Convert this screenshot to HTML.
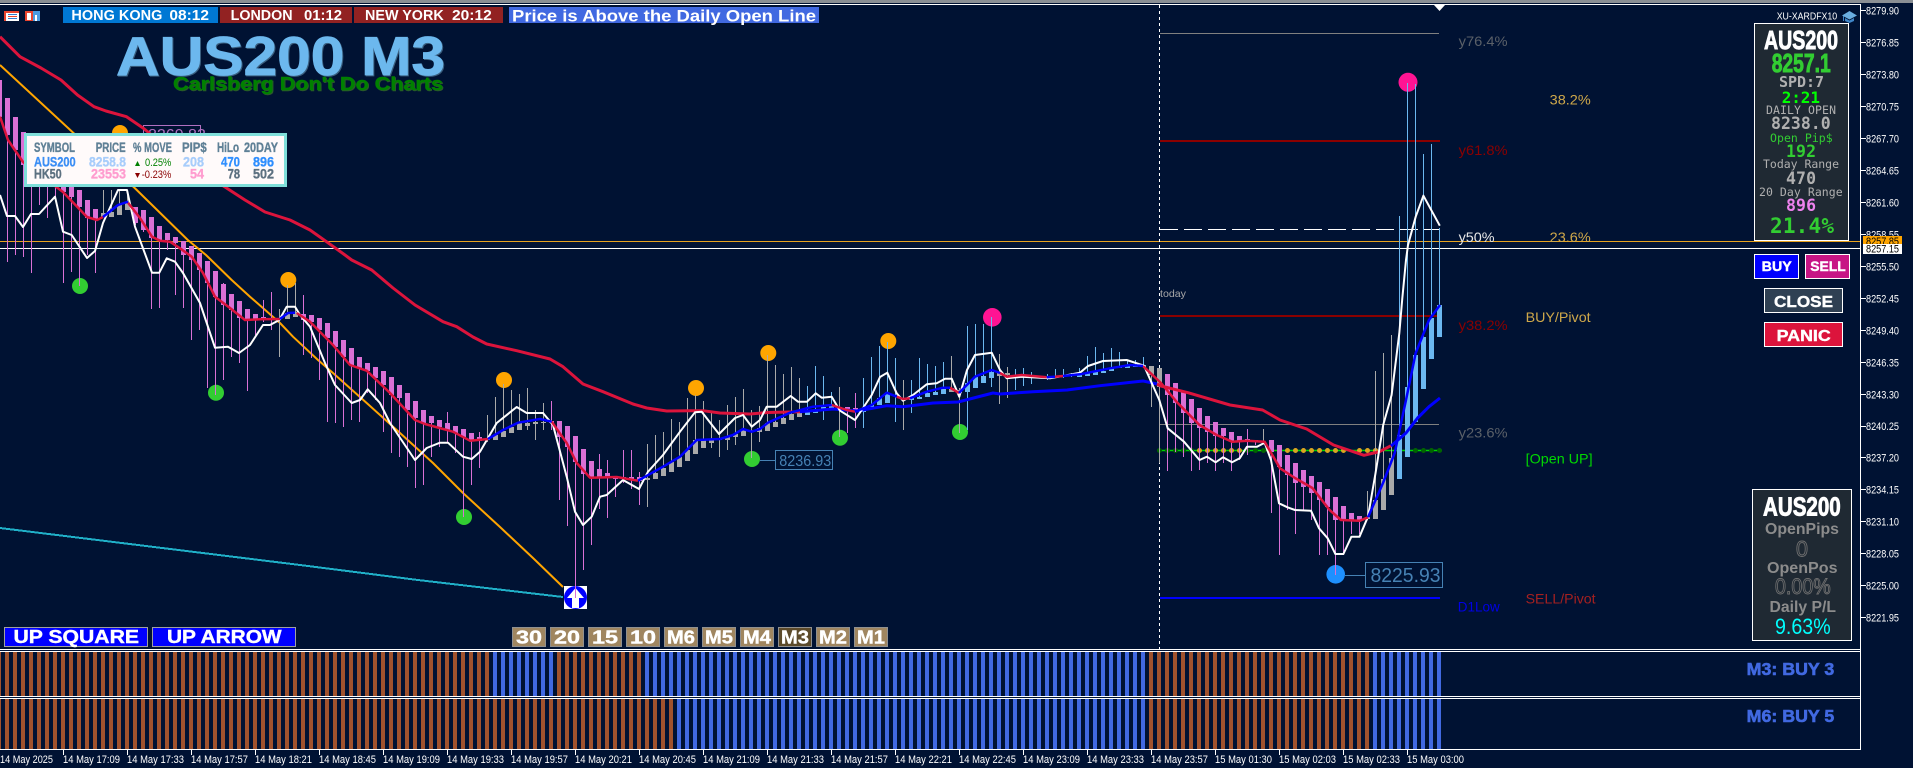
<!DOCTYPE html>
<html><head><meta charset="utf-8"><title>AUS200 M3</title>
<style>
html,body{margin:0;padding:0;background:#001233;width:1913px;height:768px;overflow:hidden}
svg{display:block}
text{font-family:"Liberation Sans",Arial,sans-serif}
.m{font-family:"DejaVu Sans Mono","Liberation Mono",monospace}
.b{font-weight:bold}
.ax{font-size:11px;fill:#fff}
.tm{font-size:11px;fill:#fff}
.l{fill:none;stroke-linejoin:round}
</style></head><body>
<svg width="1913" height="768" viewBox="0 0 1913 768" xmlns="http://www.w3.org/2000/svg">
<defs>
<pattern id="br" x="5" y="0" width="8" height="10" patternUnits="userSpaceOnUse"><rect width="4" height="10" fill="#a0522d"/></pattern>
<pattern id="bl" x="5" y="0" width="8" height="10" patternUnits="userSpaceOnUse"><rect width="4" height="10" fill="#4169e1"/></pattern>
</defs>
<rect width="1913" height="768" fill="#001233"/>
<rect width="1913" height="3" fill="#8a8f94"/>
<g shape-rendering="crispEdges">
<rect x="0" y="4" width="1861" height="1" fill="#fff"/>
<rect x="1860" y="4" width="1" height="746" fill="#fff"/>
<rect x="0" y="649" width="1861" height="1" fill="#fff"/>
<rect x="0" y="651" width="1861" height="1" fill="#fff"/>
<rect x="0" y="696" width="1861" height="1" fill="#fff"/>
<rect x="0" y="698" width="1861" height="1" fill="#fff"/>
<rect x="0" y="749" width="1861" height="1" fill="#fff"/>
<!-- subwindow stripes -->
<rect x="0" y="652" width="493" height="44" fill="url(#br)"/>
<rect x="493" y="652" width="64" height="44" fill="url(#bl)"/>
<rect x="557" y="652" width="88" height="44" fill="url(#br)"/>
<rect x="645" y="652" width="504" height="44" fill="url(#bl)"/>
<rect x="1149" y="652" width="224" height="44" fill="url(#br)"/>
<rect x="1373" y="652" width="68" height="44" fill="url(#bl)"/>
<rect x="0" y="699" width="677" height="50" fill="url(#br)"/>
<rect x="677" y="699" width="472" height="50" fill="url(#bl)"/>
<rect x="1149" y="699" width="224" height="50" fill="url(#br)"/>
<rect x="1373" y="699" width="68" height="50" fill="url(#bl)"/>
<!-- levels -->
<line x1="0" x2="1860" y1="241.5" y2="241.5" stroke="#e6a21e"/>
<line x1="0" x2="1860" y1="248.5" y2="248.5" stroke="#fff"/>
<line x1="1159.5" x2="1159.5" y1="5" y2="649" stroke="#fff" stroke-dasharray="3 3"/>
<line x1="1160" x2="1439" y1="33.5" y2="33.5" stroke="#808080"/>
<rect x="1160" y="140" width="280" height="2" fill="#8b0000"/>
<line x1="1160" x2="1440" y1="229.5" y2="229.5" stroke="#fff" stroke-dasharray="18 6"/>
<rect x="1160" y="315" width="280" height="2" fill="#8b0000"/>
<line x1="1160" x2="1439" y1="424.5" y2="424.5" stroke="#808080"/>
<rect x="1160" y="597" width="280" height="2" fill="#0000ff"/>
</g>
<polygon points="1434,5 1445,5 1439.5,11" fill="#fff"/>
<line x1="1157" x2="1442" y1="450.5" y2="450.5" stroke="#00d000" stroke-width="1.5"/>
<g stroke-width="5" stroke-linecap="round" stroke-dasharray="0 8" fill="none">
<line x1="1159.5" x2="1192" y1="450.5" y2="450.5" stroke="#006400"/>
<line x1="1199.5" x2="1240" y1="450.5" y2="450.5" stroke="#daa520"/>
<line x1="1247.5" x2="1272" y1="450.5" y2="450.5" stroke="#006400"/>
<line x1="1279.5" x2="1344" y1="450.5" y2="450.5" stroke="#daa520"/>
<line x1="1359.5" x2="1376" y1="450.5" y2="450.5" stroke="#daa520"/>
<line x1="1407.5" x2="1440" y1="450.5" y2="450.5" stroke="#006400"/>
</g>
<!-- trendlines -->
<polyline class="l" stroke="#20b0c8" stroke-width="2" points="0,528 300,565 418,580 563,597" shape-rendering="crispEdges"/>
<polyline class="l" stroke="#ffa500" stroke-width="2" points="0,65 73.5,133 134.7,188 187.8,240 206,255 231.7,280 250,296.7 280,323 293,336.7 318,360 333,373 366.7,403 400,433 433,463 463,493 500,527 533,558 563,587"/>
<!-- hidden label behind table -->
<rect x="143.5" y="125.5" width="57" height="20" fill="none" stroke="#b070c0"/>
<text x="148" y="140" font-size="16" fill="#b070c0">8269.83</text>
<!-- dots -->
<g fill="#ffa500"><circle cx="120" cy="133" r="8"/><circle cx="288.3" cy="280" r="8"/><circle cx="504" cy="380" r="8"/><circle cx="696" cy="388" r="8"/><circle cx="768.3" cy="353" r="8"/><circle cx="888.3" cy="341" r="8"/></g>
<g fill="#32cd32"><circle cx="80" cy="286" r="8"/><circle cx="216" cy="392.7" r="8"/><circle cx="464" cy="517" r="8"/><circle cx="752" cy="459" r="8"/><circle cx="840" cy="437.7" r="8"/><circle cx="960" cy="432" r="8"/></g>
<g fill="#ff1493"><circle cx="992.3" cy="317.3" r="9.3"/><ellipse cx="1408" cy="82.3" rx="9.5" ry="9.5"/></g>
<circle cx="1335.7" cy="574.3" r="9.3" fill="#1e90ff"/>
<line x1="1345" x2="1366" y1="575.5" y2="575.5" stroke="#4682b4"/>
<rect x="1365.5" y="562.5" width="77" height="25" fill="none" stroke="#4682b4"/>
<text x="1370.5" y="582" font-size="20" fill="#4682b4" textLength="70" lengthAdjust="spacingAndGlyphs">8225.93</text>
<line x1="760" x2="776" y1="460.5" y2="460.5" stroke="#4682b4"/>
<rect x="775.5" y="450.5" width="57" height="19" fill="none" stroke="#4682b4"/>
<text x="779.3" y="466" font-size="15.5" fill="#4682b4" textLength="52" lengthAdjust="spacingAndGlyphs">8236.93</text>
<!-- arrow -->
<rect x="564" y="586" width="23" height="23" fill="#fff"/>
<ellipse cx="575.5" cy="597.5" rx="11.5" ry="11.5" fill="#0000ff"/>
<polygon points="575.5,588 584,598 579,598 579,608 572,608 572,598 567,598" fill="#fff"/>
<!-- candles -->
<g shape-rendering="crispEdges" fill="none">
<path stroke="#da70d6" d="M7.5 98V262M15.5 117V255M23.5 132V257M31.5 140V273M39.5 150V205M47.5 160V218M55.5 170V197M63.5 175V283M71.5 187V272M79.5 190V286M87.5 200V255M95.5 209V273M135.5 207V225M143.5 210V232M151.5 217V309M159.5 226V308M167.5 233V250M175.5 237V295M183.5 241V308M191.5 246V340M199.5 253V330M207.5 261V388M215.5 271V395M223.5 283V380M231.5 294V357M239.5 301V363M247.5 309V391M255.5 314V335M263.5 300V322M271.5 292V330M303.5 295V355M311.5 315V358M319.5 318V380M327.5 323V422M335.5 331V423M343.5 340V427M351.5 348V420M359.5 357V422M367.5 363V393M375.5 367V400M383.5 371V432M391.5 377V453M399.5 385V457M407.5 393V467M415.5 401V488M423.5 410V485M431.5 416V457M439.5 420V447M447.5 412V443M455.5 426V453M463.5 429V517M471.5 433V485M479.5 432V468M551.5 401V430M559.5 421V500M567.5 426V526M575.5 436V598M583.5 449V570M591.5 461V545M599.5 454V509M607.5 460V518M615.5 477V497M623.5 450V483M631.5 450V489M639.5 472V505M847.5 407V433M855.5 393V428M1167.5 374V471M1175.5 383V452M1183.5 392V457M1191.5 399V471M1199.5 408V470M1207.5 416V463M1215.5 422V471M1223.5 428V463M1231.5 432V471M1239.5 436V460M1247.5 429V455M1255.5 440V445M1271.5 440V513M1279.5 445V555M1287.5 455V510M1295.5 463V534M1303.5 470V510M1311.5 476V520M1319.5 482V555M1327.5 489V555M1335.5 497V575M1343.5 506V555M1351.5 513V534M1359.5 516V534"/>
<path stroke="#a9a9a9" d="M103.5 190V217M111.5 190V217M119.5 190V215M127.5 190V210M279.5 309V357M287.5 285V319M295.5 283V317M487.5 415V442M495.5 397V440M503.5 384V437M511.5 390V433M519.5 394V430M527.5 388V430M535.5 410V440M543.5 403V430M647.5 444V507M655.5 435V479M663.5 432V476M671.5 419V472M679.5 422V467M687.5 398V461M695.5 395V454M703.5 401V448M711.5 413V448M719.5 420V457M727.5 405V450M735.5 397V445M743.5 389V436M751.5 410V458M759.5 406V442M767.5 355V431M775.5 365V427M783.5 374V424M791.5 367V420M799.5 378V417M839.5 387V437M903.5 380V430M951.5 356V392M959.5 388V433M999.5 354V404M1007.5 367V398M1151.5 366V407M1159.5 368V463M1263.5 429V442M1367.5 491V520M1375.5 371V519M1383.5 353V510M1391.5 335V495"/>
<path stroke="#6cb8f0" d="M807.5 386V415M815.5 366V413M823.5 376V420M831.5 392V408M863.5 378V428M871.5 357V407M879.5 346V405M887.5 342V403M895.5 358V422M911.5 380V413M919.5 358V399M927.5 364V397M935.5 366V395M943.5 362V394M967.5 326V430M975.5 324V388M983.5 324V383M991.5 317V387M1015.5 369V390M1023.5 368V386M1031.5 372V384M1047.5 374V380M1055.5 369V378M1063.5 369V378M1071.5 373V377M1079.5 368V377M1087.5 356V376M1095.5 347V375M1103.5 353V373M1111.5 348V371M1119.5 352V368M1127.5 360V368M1135.5 360V367M1143.5 357V367M1399.5 216V479M1407.5 83V457M1415.5 84V422M1423.5 154V389M1431.5 144V359M1439.5 228V337"/>
<path stroke="none" fill="#da70d6" d="M-3 80h5V117h-5zM5 98h5V135h-5zM13 117h5V150h-5zM21 132h5V165h-5zM61 185h5V192h-5zM69 187h5V197h-5zM77 190h5V207h-5zM85 200h5V218h-5zM93 209h5V220h-5zM133 207h5V223h-5zM141 210h5V230h-5zM149 217h5V238h-5zM157 226h5V240h-5zM165 233h5V240h-5zM173 237h5V243h-5zM181 241h5V255h-5zM189 246h5V260h-5zM197 253h5V270h-5zM205 261h5V283h-5zM213 271h5V297h-5zM221 284h5V305h-5zM229 294h5V310h-5zM237 301h5V318h-5zM245 309h5V319h-5zM253 314h5V320h-5zM261 317h5V320h-5zM269 318h5V320h-5zM301 314h5V320h-5zM309 315h5V322h-5zM317 318h5V330h-5zM325 323h5V338h-5zM333 331h5V347h-5zM341 340h5V357h-5zM349 348h5V365h-5zM357 357h5V368h-5zM365 363h5V371h-5zM373 367h5V378h-5zM381 371h5V385h-5zM389 377h5V395h-5zM397 385h5V398h-5zM405 393h5V410h-5zM413 401h5V418h-5zM421 410h5V423h-5zM429 416h5V423h-5zM437 420h5V427h-5zM445 423h5V430h-5zM453 426h5V433h-5zM461 429h5V437h-5zM469 433h5V440h-5zM477 437h5V441h-5zM549 421h5V423h-5zM557 421h5V437h-5zM565 426h5V447h-5zM573 436h5V462h-5zM581 449h5V474h-5zM589 461h5V478h-5zM597 469h5V478h-5zM605 473h5V478h-5zM613 477h5V479h-5zM621 477h5V479h-5zM629 477h5V479h-5zM637 477h5V481h-5zM845 407h5V410h-5zM853 408h5V410h-5zM1165 374h5V395h-5zM1173 383h5V403h-5zM1181 392h5V413h-5zM1189 399h5V423h-5zM1197 408h5V428h-5zM1205 416h5V432h-5zM1213 422h5V436h-5zM1221 428h5V436h-5zM1229 432h5V441h-5zM1237 436h5V442h-5zM1245 439h5V442h-5zM1253 440h5V442h-5zM1269 440h5V452h-5zM1277 445h5V467h-5zM1285 455h5V475h-5zM1293 463h5V483h-5zM1301 470h5V487h-5zM1309 476h5V493h-5zM1317 482h5V500h-5zM1325 489h5V507h-5zM1333 497h5V520h-5zM1341 506h5V520h-5zM1349 513h5V520h-5zM1357 516h5V520h-5z"/>
<path stroke="none" fill="#a9a9a9" d="M101 213h5V217h-5zM109 212h5V217h-5zM117 205h5V215h-5zM125 202h5V210h-5zM285 313h5V319h-5zM293 312h5V317h-5zM485 438h5V440h-5zM493 435h5V440h-5zM501 431h5V437h-5zM509 427h5V433h-5zM517 423h5V430h-5zM525 423h5V426h-5zM533 422h5V424h-5zM541 422h5V423h-5zM645 478h5V480h-5zM653 473h5V479h-5zM661 468h5V476h-5zM669 462h5V472h-5zM677 457h5V467h-5zM685 450h5V461h-5zM693 440h5V454h-5zM701 439h5V448h-5zM709 439h5V443h-5zM717 438h5V440h-5zM725 437h5V440h-5zM733 434h5V437h-5zM741 430h5V436h-5zM749 430h5V432h-5zM757 428h5V432h-5zM765 423h5V431h-5zM773 422h5V427h-5zM781 418h5V424h-5zM789 414h5V420h-5zM797 413h5V417h-5zM837 407h5V409h-5zM949 388h5V392h-5zM957 390h5V393h-5zM997 373h5V376h-5zM1005 373h5V375h-5zM1149 366h5V375h-5zM1157 368h5V387h-5zM1365 517h5V519h-5zM1373 500h5V519h-5zM1381 479h5V510h-5zM1389 458h5V495h-5z"/>
<path stroke="none" fill="#6cb8f0" d="M805 412h5V415h-5zM813 411h5V413h-5zM821 407h5V410h-5zM829 405h5V408h-5zM861 410h5V412h-5zM869 405h5V407h-5zM877 398h5V405h-5zM885 394h5V403h-5zM909 398h5V400h-5zM917 397h5V399h-5zM925 393h5V397h-5zM933 392h5V395h-5zM941 389h5V394h-5zM965 383h5V392h-5zM973 377h5V388h-5zM981 376h5V383h-5zM989 372h5V378h-5zM1077 374h5V377h-5zM1085 373h5V376h-5zM1093 372h5V375h-5zM1101 371h5V373h-5zM1109 368h5V371h-5zM1117 366h5V368h-5zM1125 366h5V368h-5zM1133 365h5V367h-5zM1141 365h5V367h-5zM1397 435h5V479h-5zM1405 387h5V457h-5zM1413 355h5V422h-5zM1421 337h5V389h-5zM1429 318h5V359h-5zM1437 305h5V337h-5z"/>
</g>
<!-- slow MA -->
<polyline class="l" stroke="#dc143c" stroke-width="3" points="0,36.7 20,56.7 41,68 61,80 77.5,95 94,106.7 106,111 126.5,116.7 143,128 180,158 226.5,188 245,200 265,212 290,220 310,230 326.5,241.7 345,255 351.7,260 371.7,270 393,288 415,305 443,321.7 456.7,326.7 473,337 486.7,344 516.7,350.7 550,359 563,366.7 583,384 603,391.7 633,404 646.7,408 666.7,411 690,410.7 703,410.7 720,413 750,414 768,412.5 800,411.7"/>
<polyline class="l" stroke="#0000ff" stroke-width="3" points="800,411.7 833,409 857,411 887,405.7 903,406.7 933,403 958,402 993,393 1000,394 1033,391.7 1067,390 1100,385.7 1143,381 1157,384"/>
<polyline class="l" stroke="#dc143c" stroke-width="3" points="1157,384 1161,386 1188,392.7 1230,405 1262.6,410 1280,420 1306.7,429 1333.5,445 1364,455.3 1379.4,451.7 1391,445.7"/>
<polyline class="l" stroke="#0000ff" stroke-width="3" points="1391,446 1406,433 1417.6,418 1429,406.7 1440,398"/>
<!-- white line -->
<polyline class="l" stroke="#fff" stroke-width="2" points="0,195 7,216 15,216 23,227 31,214 39,214 55,196.7 63,231.7 71.7,235 87,258 95,251 103,223 118,190 127,190 135,226.7 152,272.7 159.3,272.7 166.7,258.3 175,261.7 183,273 200,303 215,347.7 228,346.7 239,353 250,345 263,325 270,325 279.3,320 286.7,306.7 295,306.7 300,315 310,326.7 325,363 335,385 351.7,403 360,400 367.7,389.3 380,403 390,423 415,460 426.7,448 440,442.7 448,442.7 463,456.7 471.7,459 480,451.7 496.7,423 516.7,407 526.7,413 543,413 553,425 566.7,476.7 575,511.7 583,525 591.7,516.7 600,496.7 606.7,495 623,480 639,489 648,471.7 663,455 680,431.7 695,412.3 701.7,411.7 719,434 735,418 743,415 751.7,426.7 760,420 766.7,406.7 776.7,406.7 790.7,396 798,401.7 807,401.7 815.7,393.3 821.7,397.7 831.7,396.7 840,410.7 855,420 871.7,395 880,377 887.3,372.7 896.7,393.3 903,400.7 913,395 926.7,384.3 936.7,383.3 945,378.7 951.7,378.7 959.3,396.7 967,370 975,355 991.7,352.7 1000,370 1006.7,378.3 1021.7,376.7 1050,378.3 1068,375 1080,372.7 1088,366 1103,361 1126.7,360 1144,365.7 1159.3,400 1167.7,428.3 1184,441.7 1199.5,460 1207,456.7 1215.6,462.3 1223,457.3 1232,462.3 1239.7,458.3 1247,446.7 1257,446.7 1264.6,442.7 1271,460 1279,503.3 1287.5,507.3 1295,510 1311,510.7 1319,528.3 1327.7,538.3 1335.4,554 1343.4,554 1351.4,536.7 1359.5,536.7 1368,516.7 1375.5,473.3 1383.2,425 1391.6,395 1399.3,333.3 1402.3,298.3 1406,260 1408,245 1415.7,216.7 1423.4,195.7 1439.8,225.7"/>
<!-- fast MA -->
<g class="l" stroke-width="2.5" fill="none" stroke-linejoin="round">
<g stroke="#dc143c">
<polyline points="0,116.7 8,140 23,162 63,192 87,217 97,220 103,217"/>
<polyline points="128,202.7 140,218 152,236.7 160,240.7 170,241.7 180,248.3 191.7,256.7 203,273 215,296.7 230,308 245,320 260,319.3 280,319"/>
<polyline points="296.7,313 310,321.7 333,345 350,365 366.7,370.7 390,393 415,420 425,424 453,431.7 470,440.7 488,439"/>
<polyline points="551.7,421.7 566.7,443 576.7,463 590,477.7 616.7,477 638,480.7"/>
<polyline points="831.7,405 846.7,410 855,411.7"/>
<polyline points="896.7,396.7 903,399 910,398.3"/>
<polyline points="950,387.7 959,393"/>
<polyline points="1000,373 1006.7,376.7 1021.7,375 1046.7,377.3"/>
<polyline points="1055,376.7 1063,376"/>
<polyline points="1143,366 1161,383 1176.5,401.7 1199.5,425 1216.7,435 1232,441.7 1247,440.7 1264.6,441.7 1280,468.3 1295,478 1312.4,488 1329.6,510 1341,520 1360,520.7 1368,517.3"/>
</g>
<g stroke="#0000ff">
<polyline points="103,217 118,205 128,201.7"/>
<polyline points="280,319 288,313 295,312.7"/>
<polyline points="488,439 503,430 518,422.7 540,419 551.7,421.7"/>
<polyline points="638,480.7 663,466.7 680,456.7 696.7,440 720,439 733,435 743,429 751.7,431.7 760,429 768,422.7 790,412.7 813,406.7 831.7,405"/>
<polyline points="855,411.7 871.7,405 886.7,392.7 896.7,396.7"/>
<polyline points="910,398.3 926.7,391.7 943,387.7 950,387.7"/>
<polyline points="959,393 975,376.7 991.7,370 1000,373"/>
<polyline points="1046.7,377.3 1055,376.7"/>
<polyline points="1063,376 1080,374.3 1110,368.3 1130,365 1143,366"/>
<polyline points="1368,517.3 1383,483 1394.7,453 1406,400 1415.7,353 1429,320 1440,305"/>
</g>
</g>
<!-- fib texts -->
<g font-size="14">
<text x="1458.6" y="46" fill="#5a6068" textLength="49" lengthAdjust="spacingAndGlyphs">y76.4%</text>
<text x="1549.7" y="104.5" fill="#cfa84a" textLength="41" lengthAdjust="spacingAndGlyphs">38.2%</text>
<text x="1458.6" y="155" fill="#8b0000" textLength="49" lengthAdjust="spacingAndGlyphs">y61.8%</text>
<text x="1458.6" y="242" fill="#e8e8e8" textLength="36" lengthAdjust="spacingAndGlyphs">y50%</text>
<text x="1549.7" y="242" fill="#cfa84a" textLength="41" lengthAdjust="spacingAndGlyphs">23.6%</text>
<text x="1525.6" y="322" fill="#cfa84a" textLength="65" lengthAdjust="spacingAndGlyphs">BUY/Pivot</text>
<text x="1458.6" y="330" fill="#8b0000" textLength="49" lengthAdjust="spacingAndGlyphs">y38.2%</text>
<text x="1458.6" y="437.5" fill="#5a6068" textLength="49" lengthAdjust="spacingAndGlyphs">y23.6%</text>
<text x="1525.6" y="463.5" fill="#00d800" textLength="67" lengthAdjust="spacingAndGlyphs">[Open UP]</text>
<text x="1525.6" y="603.5" fill="#a52020" textLength="70" lengthAdjust="spacingAndGlyphs">SELL/Pivot</text>
<text x="1457.8" y="611.5" fill="#0000e6" textLength="42" lengthAdjust="spacingAndGlyphs">D1Low</text>
</g>
<text x="1160" y="297" font-size="10.5" fill="#a8a8a8" textLength="26" lengthAdjust="spacingAndGlyphs">today</text>
<!-- header -->
<g shape-rendering="crispEdges">
<rect x="4" y="11" width="15" height="10" fill="#fff"/><rect x="4" y="11" width="15" height="2" fill="#e8452f"/><rect x="4" y="11" width="2" height="10" fill="#e8452f"/>
<rect x="8" y="14" width="9" height="1" fill="#2f7fd0"/><rect x="8" y="16" width="9" height="1" fill="#e8452f"/><rect x="8" y="18" width="9" height="1" fill="#2f7fd0"/>
<rect x="25" y="11" width="8" height="10" fill="#e8452f"/><rect x="27" y="13" width="4" height="7" fill="#fff"/>
<rect x="33" y="11" width="7" height="10" fill="#4a9be0"/><rect x="35" y="15" width="2" height="6" fill="#fff"/>
<rect x="63" y="7" width="155" height="16" fill="#0078d4"/>
<rect x="220" y="7" width="132" height="16" fill="#922222"/>
<rect x="354" y="7" width="149" height="16" fill="#922222"/>
<rect x="509" y="7" width="310" height="16" fill="#4169e1"/>
</g>
<g fill="#fff" font-weight="bold" font-size="14.5">
<text x="71.4" y="20" textLength="91" lengthAdjust="spacingAndGlyphs">HONG KONG</text>
<text x="169.4" y="20" textLength="39.6" lengthAdjust="spacingAndGlyphs">08:12</text>
<text x="230.6" y="20" textLength="62" lengthAdjust="spacingAndGlyphs">LONDON</text>
<text x="304" y="20" textLength="38" lengthAdjust="spacingAndGlyphs">01:12</text>
<text x="365" y="20" textLength="78.7" lengthAdjust="spacingAndGlyphs">NEW YORK</text>
<text x="452" y="20" textLength="39.8" lengthAdjust="spacingAndGlyphs">20:12</text>
<text x="512" y="21.3" font-size="17" textLength="304" lengthAdjust="spacingAndGlyphs">Price is Above the Daily Open Line</text>
</g>
<text x="117" y="76" font-size="55" font-weight="bold" fill="#3a5f7f" stroke="#3a5f7f" stroke-width=".8" textLength="329" lengthAdjust="spacingAndGlyphs">AUS200 M3</text>
<text x="116" y="75" font-size="55" font-weight="bold" fill="#6cb8ee" stroke="#6cb8ee" stroke-width=".8" textLength="329" lengthAdjust="spacingAndGlyphs">AUS200 M3</text>
<text x="174" y="91" font-size="18.5" font-weight="bold" fill="#2b5a2b" stroke="#2b5a2b" stroke-width=".4" textLength="270" lengthAdjust="spacingAndGlyphs">Carlsberg Don't Do Charts</text>
<text x="173" y="90" font-size="18.5" font-weight="bold" fill="#008000" stroke="#008000" stroke-width=".4" textLength="270" lengthAdjust="spacingAndGlyphs">Carlsberg Don't Do Charts</text>
<!-- table -->
<rect x="25.5" y="134.5" width="260" height="51" fill="#fffafa" stroke="#7fdfda" stroke-width="3"/>
<g font-size="14" font-weight="bold" fill="#5f8096" stroke-width=".35">
<g stroke="#5f8096">
<text x="34" y="152" textLength="41" lengthAdjust="spacingAndGlyphs">SYMBOL</text>
<text x="95.7" y="152" textLength="30" lengthAdjust="spacingAndGlyphs">PRICE</text>
<text x="133" y="152" textLength="39" lengthAdjust="spacingAndGlyphs">% MOVE</text>
<text x="182" y="152" textLength="24.7" lengthAdjust="spacingAndGlyphs">PIP$</text>
<text x="217" y="152" textLength="22" lengthAdjust="spacingAndGlyphs">HiLo</text>
<text x="244" y="152" textLength="34" lengthAdjust="spacingAndGlyphs">20DAY</text>
</g>
<text x="34" y="166.7" fill="#3b8ef5" stroke="#3b8ef5" textLength="41.7" lengthAdjust="spacingAndGlyphs">AUS200</text>
<text x="89" y="166.7" fill="#a8cdfb" stroke="#a8cdfb" textLength="37" lengthAdjust="spacingAndGlyphs">8258.8</text>
<text x="183" y="166.7" fill="#a8cdfb" stroke="#a8cdfb" textLength="21" lengthAdjust="spacingAndGlyphs">208</text>
<text x="221" y="166.7" fill="#2f8fff" stroke="#2f8fff" textLength="19" lengthAdjust="spacingAndGlyphs">470</text>
<text x="253" y="166.7" fill="#2f8fff" stroke="#2f8fff" textLength="21" lengthAdjust="spacingAndGlyphs">896</text>
<text x="34" y="178.5" fill="#5c7080" stroke="#5c7080" textLength="27.7" lengthAdjust="spacingAndGlyphs">HK50</text>
<text x="91" y="178.5" fill="#ff9ccf" stroke="#ff9ccf" textLength="35" lengthAdjust="spacingAndGlyphs">23553</text>
<text x="190" y="178.5" fill="#ff9ccf" stroke="#ff9ccf" textLength="14" lengthAdjust="spacingAndGlyphs">54</text>
<text x="227.7" y="178.5" fill="#5c7080" stroke="#5c7080" textLength="12.3" lengthAdjust="spacingAndGlyphs">78</text>
<text x="253" y="178.5" fill="#5c7080" stroke="#5c7080" textLength="21" lengthAdjust="spacingAndGlyphs">502</text>
</g>
<polygon points="135,166 140,166 137.5,161" fill="#008000"/>
<text x="145" y="166" font-size="11" fill="#008000" textLength="26.3" lengthAdjust="spacingAndGlyphs">0.25%</text>
<polygon points="135,173 140,173 137.5,178" fill="#8b0000"/>
<text x="141.7" y="178" font-size="11" fill="#8b0000" textLength="29.6" lengthAdjust="spacingAndGlyphs">-0.23%</text>
<!-- bottom buttons -->
<g shape-rendering="crispEdges">
<rect x="4.5" y="627.5" width="143" height="19" fill="#0000ff" stroke="#a0a0a0"/>
<rect x="152.5" y="627.5" width="143" height="19" fill="#0000ff" stroke="#a0a0a0"/>
<g fill="#a08660" stroke="#909090">
<rect x="512.5" y="627.5" width="33" height="19"/><rect x="550.5" y="627.5" width="33" height="19"/><rect x="588.5" y="627.5" width="33" height="19"/><rect x="626.5" y="627.5" width="33" height="19"/><rect x="664.5" y="627.5" width="33" height="19"/><rect x="702.5" y="627.5" width="33" height="19"/><rect x="740.5" y="627.5" width="33" height="19"/><rect x="778.5" y="627.5" width="33" height="19" fill="#5c4a2a"/><rect x="816.5" y="627.5" width="33" height="19"/><rect x="854.5" y="627.5" width="33" height="19"/>
</g></g>
<g font-weight="bold" fill="#fff" stroke="#fff" stroke-width=".4">
<text x="13.5" y="643" font-size="18" textLength="125.5" lengthAdjust="spacingAndGlyphs">UP SQUARE</text>
<text x="167" y="643" font-size="18" textLength="114.6" lengthAdjust="spacingAndGlyphs">UP ARROW</text>
<g font-size="18">
<text x="516" y="643.5" textLength="26" lengthAdjust="spacingAndGlyphs">30</text>
<text x="554" y="643.5" textLength="26" lengthAdjust="spacingAndGlyphs">20</text>
<text x="592" y="643.5" textLength="26" lengthAdjust="spacingAndGlyphs">15</text>
<text x="630" y="643.5" textLength="26" lengthAdjust="spacingAndGlyphs">10</text>
<text x="667" y="643.5" textLength="28" lengthAdjust="spacingAndGlyphs">M6</text>
<text x="705" y="643.5" textLength="28" lengthAdjust="spacingAndGlyphs">M5</text>
<text x="743" y="643.5" textLength="28" lengthAdjust="spacingAndGlyphs">M4</text>
<text x="781" y="643.5" textLength="28" lengthAdjust="spacingAndGlyphs">M3</text>
<text x="819" y="643.5" textLength="28" lengthAdjust="spacingAndGlyphs">M2</text>
<text x="857" y="643.5" textLength="28" lengthAdjust="spacingAndGlyphs">M1</text>
</g></g>
<!-- right panel 1 -->
<text x="1776.7" y="19.5" font-size="10.5" fill="#fff" textLength="60.5" lengthAdjust="spacingAndGlyphs">XU-XARDFX10</text>
<polygon points="1842,15.5 1849.5,11 1857,15.5 1849.5,19.5" fill="#6aaee0"/>
<polygon points="1845,18 1849.5,20.5 1854,18 1854,21 1849.5,23 1845,21" fill="#3f86c8"/>
<rect x="1843" y="16" width="1" height="5" fill="#3f86c8"/>
<rect x="1754.5" y="23.5" width="94" height="217" fill="#1f2933" stroke="#fff"/>
<text x="1764" y="49" font-size="26" font-weight="bold" fill="#fff" stroke="#fff" stroke-width=".9" textLength="74" lengthAdjust="spacingAndGlyphs">AUS200</text>
<text x="1771.7" y="72" font-size="26" font-weight="bold" fill="#32cd32" stroke="#32cd32" stroke-width=".9" textLength="59" lengthAdjust="spacingAndGlyphs">8257.1</text>
<g class="m" text-anchor="start">
<text class="m b" x="1779" y="87" font-size="15" fill="#b0b0b0" textLength="45">SPD:7</text>
<text class="m b" x="1781.7" y="103" font-size="16" fill="#00ff00" textLength="38.3">2:21</text>
<text class="m" x="1766" y="114" font-size="11.5" fill="#b0b0b0" textLength="70">DAILY OPEN</text>
<text class="m b" x="1771" y="129" font-size="16.5" fill="#b0b0b0" textLength="59.7">8238.0</text>
<text class="m" x="1770" y="142" font-size="11.5" fill="#32cd32" textLength="62.7">Open Pip$</text>
<text class="m b" x="1786" y="157" font-size="16.5" fill="#32cd32" textLength="30">192</text>
<text class="m" x="1763" y="168" font-size="11.5" fill="#b0b0b0" textLength="76">Today Range</text>
<text class="m b" x="1786" y="184" font-size="16.5" fill="#b0b0b0" textLength="30">470</text>
<text class="m" x="1759" y="196" font-size="11.5" fill="#b0b0b0" textLength="83.7">20 Day Range</text>
<text class="m b" x="1786" y="211" font-size="16.5" fill="#ee82ee" textLength="30">896</text>
<text class="m b" x="1770" y="233" font-size="21" fill="#32cd32" textLength="64">21.4%</text>
</g>
<!-- buttons -->
<g shape-rendering="crispEdges" stroke="#fff">
<rect x="1754.5" y="254.5" width="44" height="24" fill="#0000ff"/>
<rect x="1805.5" y="254.5" width="44" height="24" fill="#c71585"/>
<rect x="1764.5" y="288.5" width="78" height="24" fill="#2f4053"/>
<rect x="1764.5" y="322.5" width="78" height="24" fill="#dc143c"/>
</g>
<g font-weight="bold" fill="#fff" stroke="#fff" stroke-width=".4">
<text x="1761.7" y="271" font-size="14" textLength="30" lengthAdjust="spacingAndGlyphs">BUY</text>
<text x="1810.3" y="271" font-size="14" textLength="35.4" lengthAdjust="spacingAndGlyphs">SELL</text>
<text x="1774" y="307" font-size="16" textLength="59" lengthAdjust="spacingAndGlyphs">CLOSE</text>
<text x="1776.7" y="341" font-size="16" textLength="54" lengthAdjust="spacingAndGlyphs">PANIC</text>
</g>
<!-- axis -->
<g shape-rendering="crispEdges" fill="#fff">
<rect x="1861" y="10" width="5" height="1"/><rect x="1861" y="42" width="5" height="1"/><rect x="1861" y="74" width="5" height="1"/><rect x="1861" y="106" width="5" height="1"/><rect x="1861" y="138" width="5" height="1"/><rect x="1861" y="170" width="5" height="1"/><rect x="1861" y="202" width="5" height="1"/><rect x="1861" y="234" width="5" height="1"/><rect x="1861" y="266" width="5" height="1"/><rect x="1861" y="298" width="5" height="1"/><rect x="1861" y="330" width="5" height="1"/><rect x="1861" y="362" width="5" height="1"/><rect x="1861" y="394" width="5" height="1"/><rect x="1861" y="426" width="5" height="1"/><rect x="1861" y="457" width="5" height="1"/><rect x="1861" y="489" width="5" height="1"/><rect x="1861" y="521" width="5" height="1"/><rect x="1861" y="553" width="5" height="1"/><rect x="1861" y="585" width="5" height="1"/><rect x="1861" y="617" width="5" height="1"/>
</g>
<g class="ax">
<text class="ax" x="1866" y="14.5" textLength="33" lengthAdjust="spacingAndGlyphs">8279.90</text>
<text class="ax" x="1866" y="46.5" textLength="33" lengthAdjust="spacingAndGlyphs">8276.85</text>
<text class="ax" x="1866" y="78.5" textLength="33" lengthAdjust="spacingAndGlyphs">8273.80</text>
<text class="ax" x="1866" y="110.5" textLength="33" lengthAdjust="spacingAndGlyphs">8270.75</text>
<text class="ax" x="1866" y="142.5" textLength="33" lengthAdjust="spacingAndGlyphs">8267.70</text>
<text class="ax" x="1866" y="174.5" textLength="33" lengthAdjust="spacingAndGlyphs">8264.65</text>
<text class="ax" x="1866" y="206.5" textLength="33" lengthAdjust="spacingAndGlyphs">8261.60</text>
<text class="ax" x="1866" y="238.5" textLength="33" lengthAdjust="spacingAndGlyphs">8258.55</text>
<text class="ax" x="1866" y="270.5" textLength="33" lengthAdjust="spacingAndGlyphs">8255.50</text>
<text class="ax" x="1866" y="302.5" textLength="33" lengthAdjust="spacingAndGlyphs">8252.45</text>
<text class="ax" x="1866" y="334.5" textLength="33" lengthAdjust="spacingAndGlyphs">8249.40</text>
<text class="ax" x="1866" y="366.5" textLength="33" lengthAdjust="spacingAndGlyphs">8246.35</text>
<text class="ax" x="1866" y="398.5" textLength="33" lengthAdjust="spacingAndGlyphs">8243.30</text>
<text class="ax" x="1866" y="430" textLength="33" lengthAdjust="spacingAndGlyphs">8240.25</text>
<text class="ax" x="1866" y="461.5" textLength="33" lengthAdjust="spacingAndGlyphs">8237.20</text>
<text class="ax" x="1866" y="493.5" textLength="33" lengthAdjust="spacingAndGlyphs">8234.15</text>
<text class="ax" x="1866" y="525.5" textLength="33" lengthAdjust="spacingAndGlyphs">8231.10</text>
<text class="ax" x="1866" y="557.5" textLength="33" lengthAdjust="spacingAndGlyphs">8228.05</text>
<text class="ax" x="1866" y="589.5" textLength="33" lengthAdjust="spacingAndGlyphs">8225.00</text>
<text class="ax" x="1866" y="621.5" textLength="33" lengthAdjust="spacingAndGlyphs">8221.95</text>
</g>
<rect x="1863" y="236" width="39" height="8" fill="#ffa500" shape-rendering="crispEdges"/>
<text x="1866" y="245" font-size="11" fill="#000" textLength="33" lengthAdjust="spacingAndGlyphs">8257.85</text>
<rect x="1863" y="244" width="39" height="10" fill="#fff" shape-rendering="crispEdges"/>
<text x="1866" y="252.5" font-size="11" fill="#000" textLength="33" lengthAdjust="spacingAndGlyphs">8257.15</text>
<!-- panel 2 -->
<rect x="1752.5" y="489.5" width="99" height="151" fill="#1f2933" stroke="#fff" shape-rendering="crispEdges"/>
<text x="1763" y="515.7" font-size="26" font-weight="bold" fill="#fff" stroke="#fff" stroke-width=".9" textLength="77.7" lengthAdjust="spacingAndGlyphs">AUS200</text>
<g font-weight="bold" fill="#8c8c8c" font-size="16">
<text x="1765" y="534" textLength="74" lengthAdjust="spacingAndGlyphs">OpenPips</text>
<text x="1767" y="573" textLength="70.5" lengthAdjust="spacingAndGlyphs">OpenPos</text>
<text x="1769.5" y="612" textLength="66.5" lengthAdjust="spacingAndGlyphs">Daily P/L</text>
</g>
<text x="1796" y="556.7" font-size="22" fill="none" stroke="#707070" stroke-width=".9" textLength="12" lengthAdjust="spacingAndGlyphs">0</text>
<text x="1775" y="594" font-size="22" fill="none" stroke="#707070" stroke-width=".9" textLength="55.7" lengthAdjust="spacingAndGlyphs">0.00%</text>
<text x="1775" y="634" font-size="22" fill="#00ffff" textLength="55.7" lengthAdjust="spacingAndGlyphs">9.63%</text>
<!-- subwindow labels -->
<text x="1746.7" y="675" font-size="17.5" font-weight="bold" fill="#4169e1" stroke="#4169e1" stroke-width=".6" textLength="87.6" lengthAdjust="spacingAndGlyphs">M3: BUY 3</text>
<text x="1746.7" y="722" font-size="17.5" font-weight="bold" fill="#4169e1" stroke="#4169e1" stroke-width=".6" textLength="87.6" lengthAdjust="spacingAndGlyphs">M6: BUY 5</text>
<!-- time axis -->
<path d="M63.5 750v5M127.5 750v5M191.5 750v5M255.5 750v5M319.5 750v5M383.5 750v5M447.5 750v5M511.5 750v5M575.5 750v5M639.5 750v5M703.5 750v5M767.5 750v5M831.5 750v5M895.5 750v5M959.5 750v5M1023.5 750v5M1087.5 750v5M1151.5 750v5M1215.5 750v5M1279.5 750v5M1343.5 750v5M1407.5 750v5" stroke="#fff" shape-rendering="crispEdges"/>
<g class="tm">
<text class="tm" x="0" y="763" textLength="53" lengthAdjust="spacingAndGlyphs">14 May 2025</text>
<text class="tm" x="63" y="763" textLength="57" lengthAdjust="spacingAndGlyphs">14 May 17:09</text>
<text class="tm" x="127" y="763" textLength="57" lengthAdjust="spacingAndGlyphs">14 May 17:33</text>
<text class="tm" x="191" y="763" textLength="57" lengthAdjust="spacingAndGlyphs">14 May 17:57</text>
<text class="tm" x="255" y="763" textLength="57" lengthAdjust="spacingAndGlyphs">14 May 18:21</text>
<text class="tm" x="319" y="763" textLength="57" lengthAdjust="spacingAndGlyphs">14 May 18:45</text>
<text class="tm" x="383" y="763" textLength="57" lengthAdjust="spacingAndGlyphs">14 May 19:09</text>
<text class="tm" x="447" y="763" textLength="57" lengthAdjust="spacingAndGlyphs">14 May 19:33</text>
<text class="tm" x="511" y="763" textLength="57" lengthAdjust="spacingAndGlyphs">14 May 19:57</text>
<text class="tm" x="575" y="763" textLength="57" lengthAdjust="spacingAndGlyphs">14 May 20:21</text>
<text class="tm" x="639" y="763" textLength="57" lengthAdjust="spacingAndGlyphs">14 May 20:45</text>
<text class="tm" x="703" y="763" textLength="57" lengthAdjust="spacingAndGlyphs">14 May 21:09</text>
<text class="tm" x="767" y="763" textLength="57" lengthAdjust="spacingAndGlyphs">14 May 21:33</text>
<text class="tm" x="831" y="763" textLength="57" lengthAdjust="spacingAndGlyphs">14 May 21:57</text>
<text class="tm" x="895" y="763" textLength="57" lengthAdjust="spacingAndGlyphs">14 May 22:21</text>
<text class="tm" x="959" y="763" textLength="57" lengthAdjust="spacingAndGlyphs">14 May 22:45</text>
<text class="tm" x="1023" y="763" textLength="57" lengthAdjust="spacingAndGlyphs">14 May 23:09</text>
<text class="tm" x="1087" y="763" textLength="57" lengthAdjust="spacingAndGlyphs">14 May 23:33</text>
<text class="tm" x="1151" y="763" textLength="57" lengthAdjust="spacingAndGlyphs">14 May 23:57</text>
<text class="tm" x="1215" y="763" textLength="57" lengthAdjust="spacingAndGlyphs">15 May 01:30</text>
<text class="tm" x="1279" y="763" textLength="57" lengthAdjust="spacingAndGlyphs">15 May 02:03</text>
<text class="tm" x="1343" y="763" textLength="57" lengthAdjust="spacingAndGlyphs">15 May 02:33</text>
<text class="tm" x="1407" y="763" textLength="57" lengthAdjust="spacingAndGlyphs">15 May 03:00</text>
</g>
</svg>
</body></html>
